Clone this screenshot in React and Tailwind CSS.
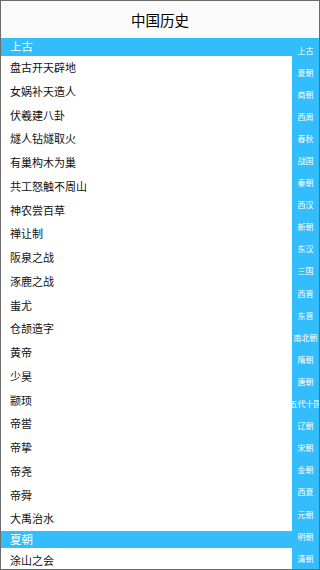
import React from "react";

const sections = [
  {
    title: "上古",
    items: [
      "盘古开天辟地", "女娲补天造人", "伏羲建八卦", "燧人钻燧取火", "有巢构木为巢",
      "共工怒触不周山", "神农尝百草", "禅让制", "阪泉之战", "涿鹿之战", "蚩尤",
      "仓颉造字", "黄帝", "少昊", "颛顼", "帝喾", "帝挚", "帝尧", "帝舜", "大禹治水",
    ],
  },
  { title: "夏朝", items: ["涂山之会"] },
];

const index = [
  "上古", "夏朝", "商朝", "西周", "春秋", "战国", "秦朝", "西汉", "新朝", "东汉",
  "三国", "西晋", "东晋", "南北朝", "隋朝", "唐朝", "五代十国", "辽朝", "宋朝",
  "金朝", "西夏", "元朝", "明朝", "清朝",
];

export default function App() {
  return (
    <div
      className="w-[320px] h-[570px] border border-[#6b6b6b] flex flex-col overflow-hidden bg-white"
      style={{ fontFamily: '"Noto Sans CJK SC", "Noto Sans", sans-serif' }}
    >
      <div className="h-[37px] shrink-0 bg-[#fafafa] flex items-center justify-center text-[14.5px] text-black">
        中国历史
      </div>
      <div className="flex-1 flex min-h-0 bg-[#33bdfd]">
        <div className="flex-1 min-w-0 overflow-hidden">
          {sections.map((s) => (
            <div key={s.title}>
              <div className="h-[17.5px] bg-[#33bdfd] text-white text-[11.5px] leading-[17.5px] pl-[9px]">
                {s.title}
              </div>
              <div className="bg-white">
                {s.items.map((it) => (
                  <div
                    key={it}
                    className="h-[23.75px] flex items-center pl-[9px] text-[11px] text-[#111]"
                  >
                    {it}
                  </div>
                ))}
              </div>
            </div>
          ))}
        </div>
        <div className="w-[27px] shrink-0 bg-[#33bdfd] pt-[1.5px] flex flex-col">
          {index.map((n) => (
            <div
              key={n}
              className="h-[22.1px] shrink-0 flex items-center justify-center text-white text-[8px] whitespace-nowrap"
            >
              {n}
            </div>
          ))}
        </div>
      </div>
    </div>
  );
}
